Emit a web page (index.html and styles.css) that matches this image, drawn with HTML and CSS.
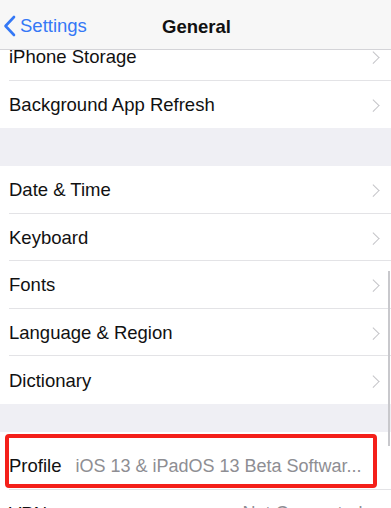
FILE: index.html
```html
<!DOCTYPE html>
<html>
<head>
<meta charset="utf-8">
<link rel="stylesheet" href="styles.css">
</head>
<body>
<div class="screen">
  <div class="navbar">
    <div class="back">
      <svg class="back-icon" width="13" height="22" viewBox="0 0 13 22"><path d="M11 2 L2.5 11 L11 20" fill="none" stroke="#3478f6" stroke-width="2.6" stroke-linecap="round" stroke-linejoin="round"/></svg>
      <span>Settings</span>
    </div>
    <div class="title">General</div>
  </div>
  <div class="list">
    <div class="group">
      <div class="row"><span class="label">iPhone Storage</span><span class="chev"></span></div>
      <div class="row last"><span class="label">Background App Refresh</span><span class="chev"></span></div>
    </div>
    <div class="gap"></div>
    <div class="group">
      <div class="row"><span class="label">Date &amp; Time</span><span class="chev"></span></div>
      <div class="row"><span class="label">Keyboard</span><span class="chev"></span></div>
      <div class="row"><span class="label">Fonts</span><span class="chev"></span></div>
      <div class="row"><span class="label">Language &amp; Region</span><span class="chev"></span></div>
      <div class="row last"><span class="label">Dictionary</span><span class="chev"></span></div>
    </div>
    <div class="gap short"></div>
    <div class="group">
      <div class="row tall"><span class="label">Profile</span><span class="value">iOS 13 &amp; iPadOS 13 Beta Softwar...</span></div>
      <div class="row"><span class="label">VPN</span><span class="value right">Not Connected</span><span class="chev"></span></div>
    </div>
  </div>
  <div class="scroll-indicator"></div>
  <div class="highlight"></div>
</div>
</body>
</html>
```
FILE: styles.css
```css
* { box-sizing: border-box; }
html, body { margin: 0; padding: 0; }
body {
  font-family: "Liberation Sans", Arial, sans-serif;
  background: #fff;
}
.screen {
  position: relative;
  width: 391px;
  height: 508px;
  overflow: hidden;
  background: #efeff4;
}
.navbar {
  position: absolute;
  top: 0;
  left: 0;
  right: 0;
  height: 50px;
  padding-top: 4px;
  background: #f7f7f7;
  border-bottom: 1px solid #d4d4d8;
  z-index: 2;
  display: flex;
  align-items: center;
  justify-content: center;
}
.back {
  position: absolute;
  left: 3px;
  top: 15px;
  display: flex;
  align-items: center;
  gap: 4px;
  color: #3478f6;
  font-size: 18.5px;
}
.back-icon { display: block; }
.title {
  font-size: 18.5px;
  font-weight: bold;
  color: #111;
  margin-left: 2px;
}
.list {
  padding-top: 33px;
}
.group { background: #fff; }
.row {
  height: 47.5px;
  display: flex;
  align-items: center;
  margin-left: 9px;
  padding-right: 14px;
  padding-top: 2px;
  border-bottom: 1px solid #e3e3e6;
  font-size: 18.5px;
  color: #111;
}
.row.last { border-bottom: none; margin-left: 0; padding-left: 9px; }
.row.tall { height: 58px; padding-top: 12px; padding-right: 18px; }
.label { white-space: nowrap; }
.value {
  margin-left: 14px;
  color: #8e8e93;
  white-space: nowrap;
  overflow: hidden;
  min-width: 0;
  flex: 1;
  font-size: 18px;
}
.value.right { text-align: right; margin-right: 6px; }
.chev {
  margin-left: auto;
  width: 8.5px;
  height: 8.5px;
  border-top: 1.5px solid #c4c4c8;
  border-right: 1.5px solid #c4c4c8;
  transform: rotate(45deg);
  flex: none;
}
.gap { height: 38px; }
.gap.short { height: 28px; }
.scroll-indicator {
  position: absolute;
  left: 388px;
  top: 271px;
  width: 1.5px;
  height: 175px;
  background: #c8c8cc;
}
.highlight {
  position: absolute;
  left: 5px;
  top: 434px;
  width: 372px;
  height: 54px;
  border: 4px solid #f4201a;
  border-radius: 4px;
  z-index: 3;
}
```
